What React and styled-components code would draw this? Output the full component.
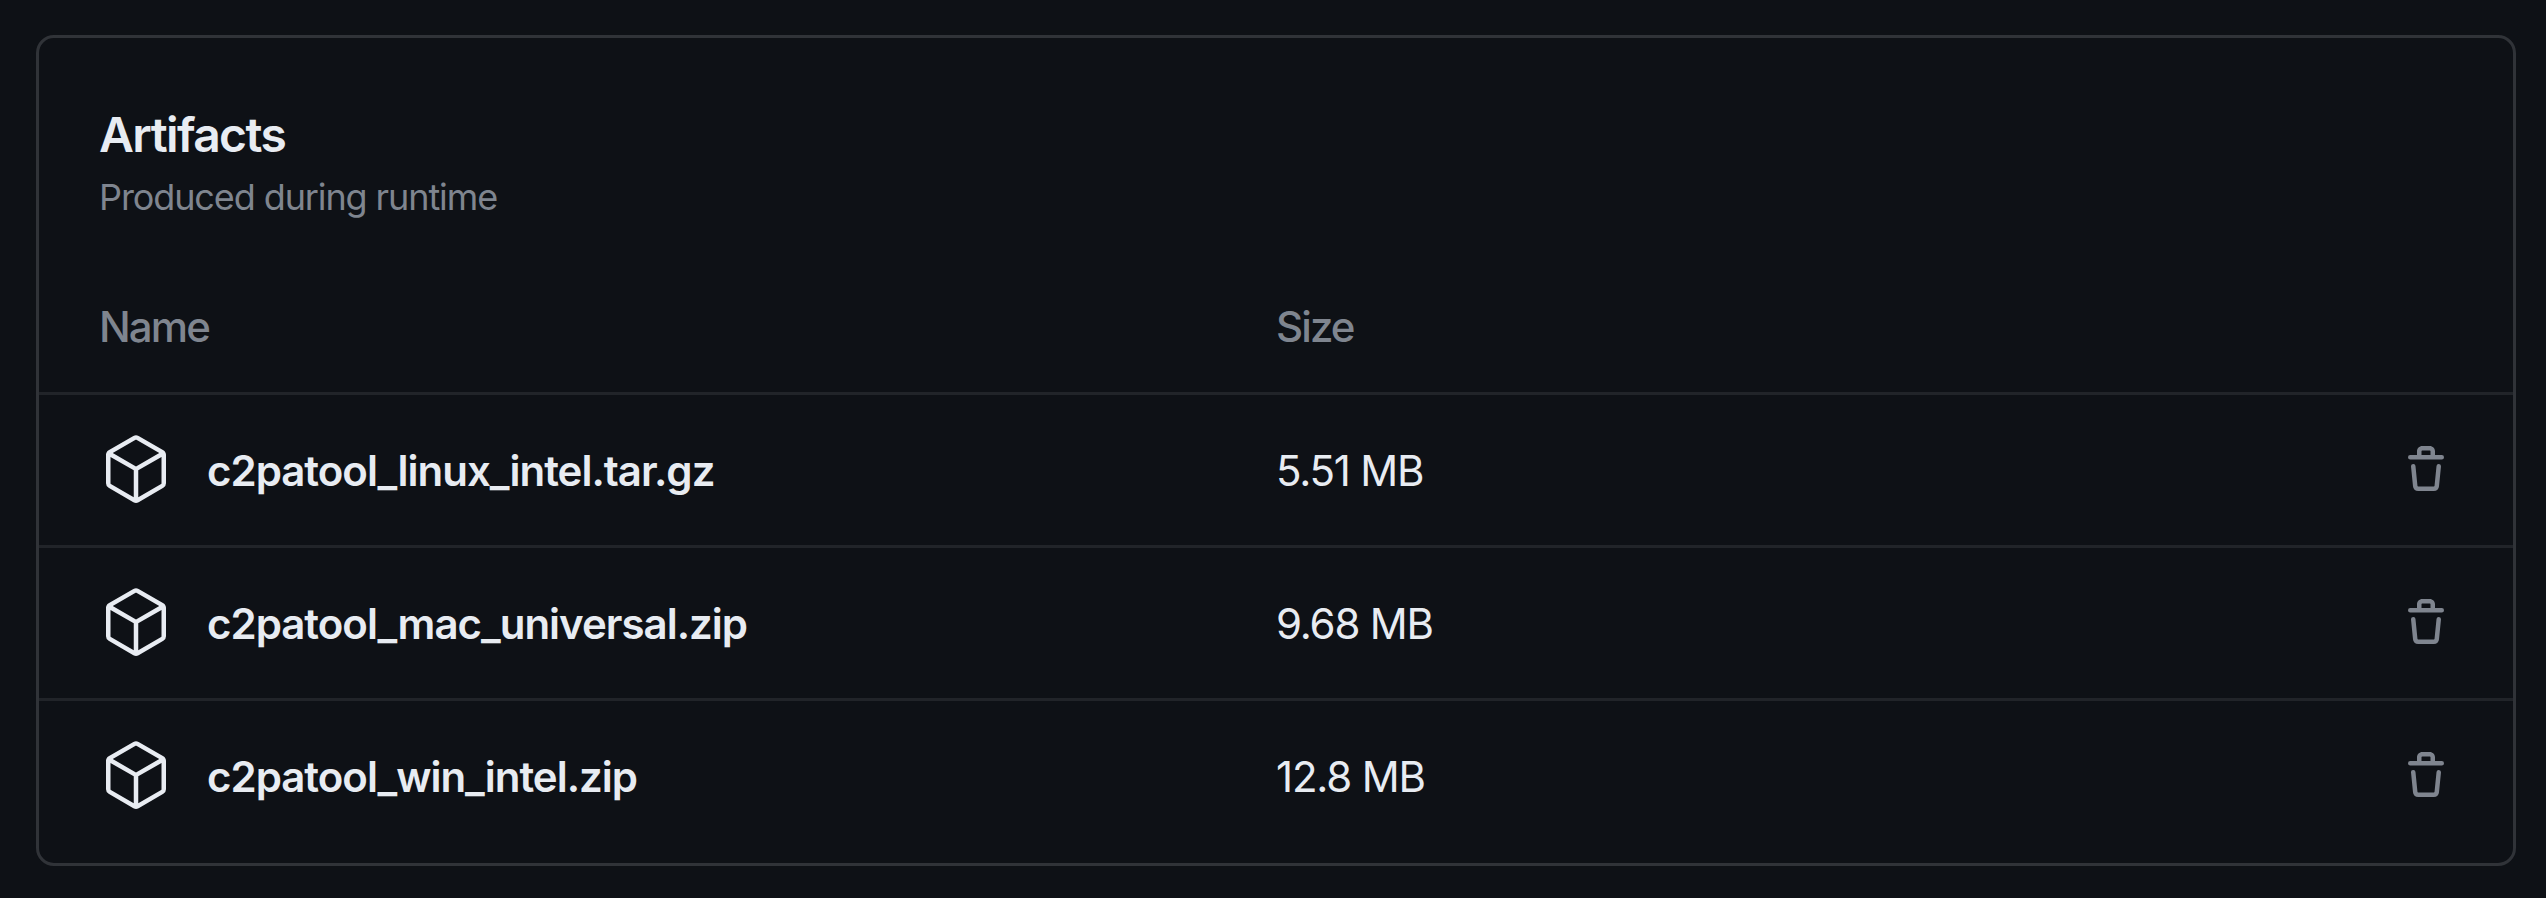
import React from "react";
import styled, { createGlobalStyle } from "styled-components";

const GlobalStyle = createGlobalStyle`
  body {
    margin: 0;
    background: #0e1116;
    color: #e8ecf2;
    font-family: Inter, "Liberation Sans", sans-serif;
  }
`;

const Page = styled.main`
  box-sizing: border-box;
  height: 898px;
  padding: 35px 30px 32px 36px;
`;

const Card = styled.section`
  box-sizing: border-box;
  height: 831px;
  border: 3px solid #303338;
  border-radius: 18px;
`;

const CardHeader = styled.header`
  padding: 61px 60px 36px;
`;

const Title = styled.h2`
  margin: 0;
  font-size: 48px;
  line-height: 72px;
  font-weight: 600;
  letter-spacing: -1.6px;
`;

const Subtitle = styled.p`
  margin: 0;
  font-size: 36px;
  line-height: 53px;
  font-weight: 400;
  letter-spacing: -1.1px;
  color: #7f858f;
`;

const Row = styled.div`
  display: grid;
  grid-template-columns: 1177px 1fr 48px;
  align-items: center;
  height: ${(p) => (p.$head ? 132 : 150)}px;
  padding: 0 63px 0 60px;
  font-size: 42px;
  line-height: 63px;
  border-top: ${(p) => (p.$head ? "none" : "3px solid #212429")};
`;

const ColumnLabel = styled.span`
  font-weight: 500;
  letter-spacing: -1.9px;
  color: #7f858f;
`;

const NameCell = styled.div`
  display: flex;
  align-items: center;
  gap: 35px;
  padding-left: 1px;
`;

const FileName = styled.span`
  font-weight: 600;
  letter-spacing: -1px;
`;

const FileSize = styled.span`
  font-weight: 400;
  letter-spacing: -1.2px;
`;

const DeleteButton = styled.button`
  display: flex;
  padding: 0;
  border: 0;
  background: none;
  color: #7f858f;
`;

const Icon = styled.svg`
  display: block;
  flex: none;
  width: ${(p) => p.$size}px;
  height: ${(p) => p.$size}px;
  fill: currentColor;
`;

const PackageIcon = () => (
  <Icon $size={72} viewBox="0 0 24 24" aria-hidden="true">
    <path d="M12.876.64V.639l8.25 4.763c.541.313.875.89.875 1.515v9.525a1.75 1.75 0 0 1-.875 1.516l-8.25 4.762a1.748 1.748 0 0 1-1.75 0l-8.25-4.763a1.75 1.75 0 0 1-.875-1.515V6.917c0-.625.334-1.202.875-1.515L11.126.64a1.748 1.748 0 0 1 1.75 0Zm-1 1.298L4.251 6.34l7.75 4.474 7.75-4.474-7.625-4.402a.248.248 0 0 0-.25 0Zm.875 19.123 7.625-4.402a.25.25 0 0 0 .125-.216V7.639l-7.75 4.474ZM3.501 7.64v8.803c0 .09.048.172.125.216l7.625 4.402v-8.947Z" />
  </Icon>
);

const TrashIcon = () => (
  <Icon $size={48} viewBox="0 0 16 16" aria-hidden="true">
    <path d="M11 1.75V3h2.25a.75.75 0 0 1 0 1.5H2.75a.75.75 0 0 1 0-1.5H5V1.75C5 .784 5.784 0 6.75 0h2.5C10.216 0 11 .784 11 1.75ZM4.496 6.675l.66 6.6a.25.25 0 0 0 .249.225h5.19a.25.25 0 0 0 .249-.225l.66-6.6a.75.75 0 0 1 1.492.149l-.66 6.6A1.748 1.748 0 0 1 10.595 15h-5.19a1.75 1.75 0 0 1-1.741-1.575l-.66-6.6a.75.75 0 1 1 1.492-.15ZM6.5 1.75V3h3V1.75a.25.25 0 0 0-.25-.25h-2.5a.25.25 0 0 0-.25.25Z" />
  </Icon>
);

const artifacts = [
  { name: "c2patool_linux_intel.tar.gz", size: "5.51 MB" },
  { name: "c2patool_mac_universal.zip", size: "9.68 MB" },
  { name: "c2patool_win_intel.zip", size: "12.8 MB" },
];

export default function App() {
  return (
    <>
      <GlobalStyle />
      <Page>
        <Card>
          <CardHeader>
            <Title>Artifacts</Title>
            <Subtitle>Produced during runtime</Subtitle>
          </CardHeader>
          <Row $head>
            <ColumnLabel>Name</ColumnLabel>
            <ColumnLabel>Size</ColumnLabel>
          </Row>
          {artifacts.map((artifact) => (
            <Row key={artifact.name}>
              <NameCell>
                <PackageIcon />
                <FileName>{artifact.name}</FileName>
              </NameCell>
              <FileSize>{artifact.size}</FileSize>
              <DeleteButton aria-label={`Delete ${artifact.name}`}>
                <TrashIcon />
              </DeleteButton>
            </Row>
          ))}
        </Card>
      </Page>
    </>
  );
}
